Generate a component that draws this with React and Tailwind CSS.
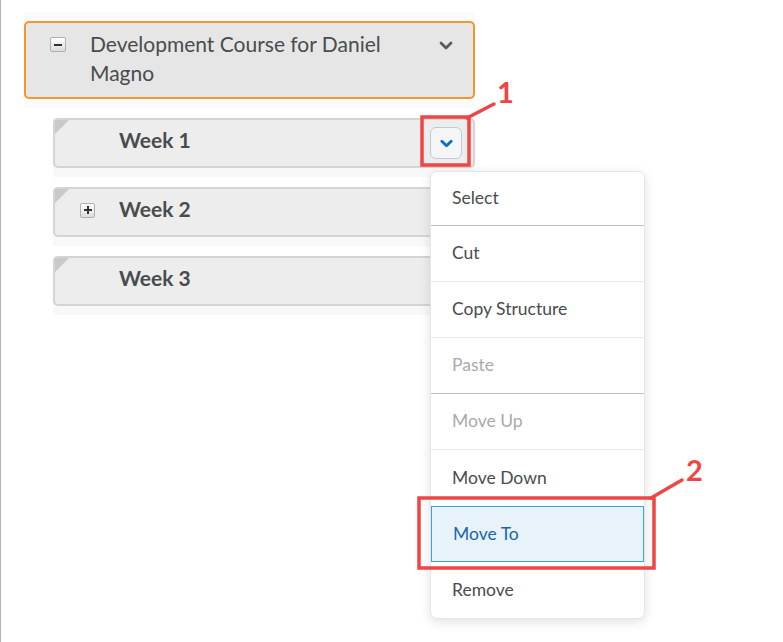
import React from 'react'

const textColor = 'text-[#494c4e]'

const MinusBox = () => (
  <span className="flex h-[15px] w-[16px] items-center justify-center rounded-[2px] border border-[#b0b0b0] bg-gradient-to-b from-white to-[#dcdcdc]">
    <span className="h-[2px] w-[8px] bg-[#333]" />
  </span>
)

const PlusBox = () => (
  <span className="relative flex h-[15px] w-[15px] items-center justify-center rounded-[2px] border border-[#b0b0b0] bg-gradient-to-b from-white to-[#dcdcdc]">
    <span className="absolute h-[2px] w-[8px] bg-[#333]" />
    <span className="absolute h-[8px] w-[2px] bg-[#333]" />
  </span>
)

const Chevron = ({ className, strokeWidth = 2.6 }) => (
  <svg className={className} viewBox="0 0 14 9" fill="none">
    <path d="M2 2l5 5 5-5" stroke="currentColor" strokeWidth={strokeWidth} strokeLinecap="round" strokeLinejoin="round" />
  </svg>
)

const WeekRow = ({ title, expandable, menuButton }) => (
  <div className="bg-[#f8f8f8] pb-[9px]">
    <div className="relative flex h-[50px] items-center rounded-[5px] border-2 border-[#d4d4d4] bg-[#ededed]">
      {/* corner marker */}
      <svg className="absolute left-0 top-0 h-[14px] w-[14px]" viewBox="0 0 14 14">
        <polygon points="0,0 14,0 0,14" fill="#c9c9c9" />
      </svg>
      <div className="flex w-[64px] pb-[4px] pl-[25px]">
        {expandable && <PlusBox />}
      </div>
      <span className={`flex-1 pb-[6px] text-[21px] font-bold ${textColor}`}>{title}</span>
      {menuButton && (
        <button className="mr-[11px] flex h-[32px] w-[32px] items-center justify-center rounded-[6px] border border-[#c3cad4] bg-[#f4f5f7] text-[#0a6fc2]">
          <Chevron className="h-[9px] w-[13px]" strokeWidth={3} />
        </button>
      )}
    </div>
  </div>
)

const menuItems = [
  { label: 'Select', divider: 'dark', first: true },
  { label: 'Cut', divider: 'light' },
  { label: 'Copy Structure', divider: 'light' },
  { label: 'Paste', disabled: true, divider: 'dark' },
  { label: 'Move Up', disabled: true, divider: 'light' },
  { label: 'Move Down' },
  { label: 'Move To', active: true },
  { label: 'Remove' },
]

const ContextMenu = () => (
  <div className="absolute left-[429px] top-[171px] w-[215px] overflow-hidden rounded-[7px] border border-[#e3e6ea] bg-white shadow-[0_3px_12px_rgba(0,0,0,0.12)]">
    {menuItems.map((item) => {
      let cls = 'flex items-center pl-[21px] text-[17.5px] '
      cls += item.first ? 'h-[54px] ' : 'h-[56px] '
      if (item.active) cls += 'border border-[#3aa0ea] bg-[#e8f2f9] text-[#1a64ad] '
      else if (item.disabled) cls += 'text-[#a7aaad] '
      else cls += `${textColor} `
      if (item.divider === 'dark') cls += 'border-b border-[#b8c1cd]'
      if (item.divider === 'light') cls += 'border-b border-[#e6e8ec]'
      return (
        <div key={item.label} className={cls}>
          {item.label}
        </div>
      )
    })}
  </div>
)

const Annotations = () => (
  <>
    <svg className="pointer-events-none absolute left-[-1px] top-0 h-[642px] w-[783px]" viewBox="0 0 783 642">
      <g stroke="#f04545" strokeWidth="3.5" fill="none">
        <rect x="422" y="117" width="47" height="48" />
        <line x1="467" y1="118" x2="494" y2="104" strokeLinecap="round" />
        <rect x="419" y="498" width="235" height="70" />
        <line x1="651" y1="498" x2="682" y2="480" strokeLinecap="round" />
      </g>
    </svg>
    <div className="absolute left-[496px] top-[77px] text-[29px] font-bold leading-none text-[#f04545]">1</div>
    <div className="absolute left-[685px] top-[455px] text-[29px] font-bold leading-none text-[#f04545]">2</div>
  </>
)

export default function App() {
  return (
    <div
      className="relative h-[642px] w-[783px] overflow-hidden border-l border-[#b5b5b5] bg-white"
      style={{ fontFamily: 'Lato, "Noto Sans", sans-serif' }}
    >
      <div className="pt-[12px]">
        {/* course node */}
        <div className="ml-[23px] w-[451px] bg-[#fafafa] pb-[9px] pt-[9px]">
          <div className="flex rounded-[5px] border-2 border-[#f2962f] bg-[#e6e6e6] pb-[10px] pt-[6px]">
            <div className="flex w-[64px] shrink-0 items-start pl-[24px] pt-[8px]">
              <MinusBox />
            </div>
            <div className={`flex-1 text-[21px] leading-[29px] ${textColor}`}>
              Development Course for Daniel Magno
            </div>
            <div className="flex w-[54px] shrink-0 justify-center pt-[12px] text-[#565a5c]">
              <Chevron className="h-[9px] w-[14px]" strokeWidth={2.8} />
            </div>
          </div>
        </div>

        {/* weeks */}
        <div className="ml-[52px] mt-[10px] flex w-[422px] flex-col gap-[10px]">
          <WeekRow title="Week 1" menuButton />
          <WeekRow title="Week 2" expandable />
          <WeekRow title="Week 3" />
        </div>
      </div>

      <ContextMenu />
      <Annotations />
    </div>
  )
}
